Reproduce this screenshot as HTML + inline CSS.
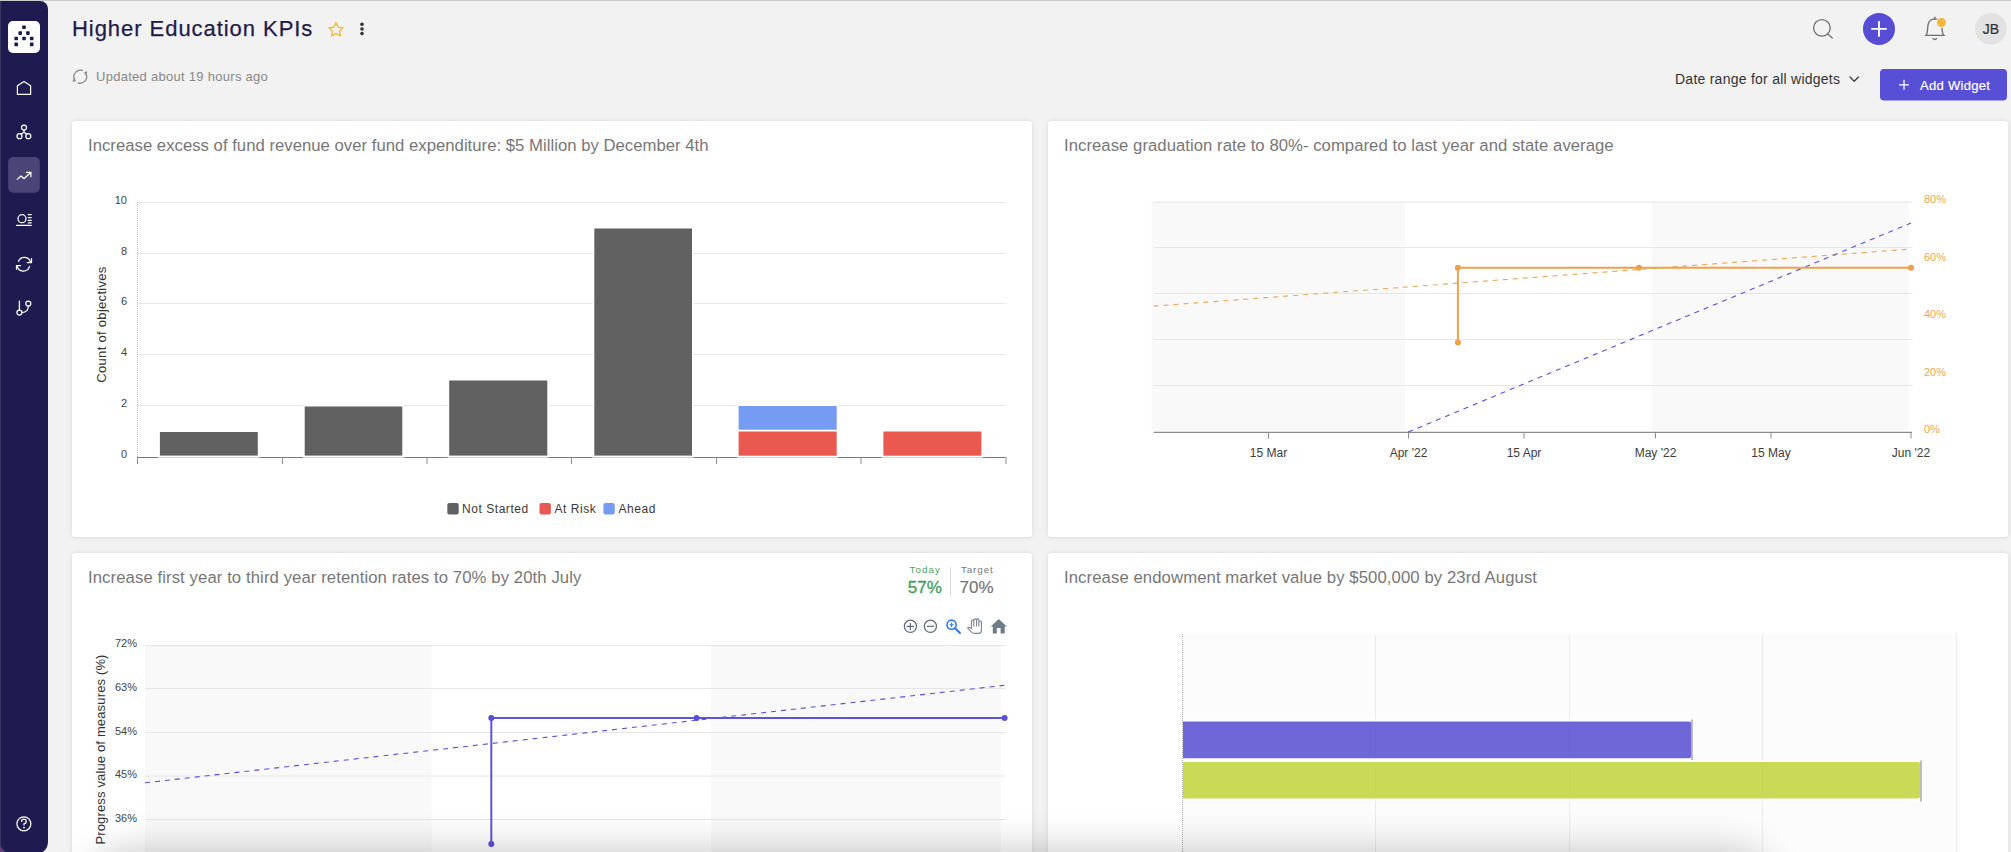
<!DOCTYPE html>
<html><head><meta charset="utf-8">
<style>
html,body{margin:0;padding:0;}
body{width:2011px;height:852px;overflow:hidden;background:#f2f2f2;position:relative;font-family:"Liberation Sans",sans-serif;}
.abs{position:absolute;}
#topline{left:0;top:0;width:2011px;height:1px;background:#c9c9c9;}
#side{left:0;top:1px;width:48px;height:853px;background:#1f1a4f;border-radius:0 8px 12px 12px;box-shadow:inset 1px 0 0 #3a3763;}
#purp{left:0;top:832px;width:20px;height:20px;background:radial-gradient(circle at 0 100%,#74407e 0,#5f3470 8px,#3a2a5e 14px,rgba(58,42,94,0) 20px);}
.card{position:absolute;background:#fff;border-radius:3px;box-shadow:0 0 5px rgba(0,0,0,0.11);}
.ctitle{position:absolute;font-size:16.7px;letter-spacing:0.06px;color:#777;white-space:nowrap;line-height:16px;}
svg{position:absolute;left:0;top:0;overflow:visible;}
</style></head>
<body>
<div id="topline" class="abs"></div>
<div id="purp" class="abs"></div>
<div id="side" class="abs"></div>

<svg width="2011" height="852" viewBox="0 0 2011 852" style="position:absolute;left:0;top:0">
<!-- logo -->
<rect x="8" y="21" width="32" height="32" rx="5" fill="#fff"/>
<g fill="#1f1a4f">
<rect x="22.2" y="25.4" width="3.6" height="3.6" rx="0.8"/>
<rect x="18.4" y="31.3" width="3.6" height="3.6" rx="0.8"/>
<rect x="26.1" y="31.3" width="3.6" height="3.6" rx="0.8"/>
<rect x="14.4" y="36.7" width="3.6" height="3.6" rx="0.8"/>
<rect x="22.2" y="36.7" width="3.6" height="3.6" rx="0.8"/>
<rect x="29.9" y="36.7" width="3.6" height="3.6" rx="0.8"/>
<rect x="14.4" y="42.6" width="3.6" height="3.6" rx="0.8"/>
<rect x="29.9" y="42.6" width="3.6" height="3.6" rx="0.8"/>
</g>
<rect x="8.2" y="157" width="31.6" height="35.7" rx="5" fill="#4a4477"/>
<g fill="none" stroke="#fff" stroke-width="1.25" stroke-linecap="round" stroke-linejoin="round">
<path d="M17.4,94.3 V85.7 L24,81.5 L30.6,85.7 V94.3 Z"/>
<circle cx="24" cy="127.6" r="2.5"/><circle cx="19.5" cy="136.2" r="2.5"/><circle cx="28.3" cy="136.2" r="2.5"/>
<path d="M24,130.1 V132.3 L21,134.3 M24,132.3 L26.9,134.3"/>
<path d="M17.3,179.4 L21,176 L24,178.7 L30.9,172.3 M26.4,172.3 H30.9 V176.7"/>
<circle cx="22" cy="218.7" r="4"/>
<path d="M28.2,214.5 H31.2 M28.2,217.5 H31.2 M28.2,220.3 H31.2 M28.2,222.8 H31.2 M16.6,225.4 H31.2"/>
<path d="M18.5,261.3 A6.3,6.3 0 0 1 30.5,262.3 M31.5,258.5 V262.5 H27.3"/>
<path d="M29.5,266.4 A6.3,6.3 0 0 1 17.2,265.8 M16.5,269.2 V265.5 H20.6"/>
<path d="M19.4,301.1 V310"/><circle cx="19.4" cy="312.5" r="2.5"/><circle cx="28.3" cy="303.6" r="2.5"/>
<path d="M28.3,306.1 Q28.3,312.5 21.9,312.5"/>
<circle cx="23.9" cy="823.8" r="7"/>
<path d="M21.6,821.4 A2.3,2.3 0 1 1 24,823.7 V825"/>
</g>
<circle cx="24" cy="827.6" r="0.9" fill="#fff"/>

<!-- header icons -->
<path d="M336,22.6 L338.2,27.2 L343,27.8 L339.5,31.2 L340.4,35.9 L336,33.6 L331.6,35.9 L332.5,31.2 L329,27.8 L333.8,27.2 Z" fill="none" stroke="#f4b942" stroke-width="1.4" stroke-linejoin="round"/>
<circle cx="362" cy="24.3" r="1.8" fill="#333"/><circle cx="362" cy="29" r="1.8" fill="#333"/><circle cx="362" cy="33.6" r="1.8" fill="#333"/>
<g fill="none" stroke="#8a8a8a" stroke-width="1.3" stroke-linecap="round">
<path d="M82.5,70.4 A6.7,6.7 0 0 0 74.2,79"/>
<path d="M78.3,83 A6.7,6.7 0 0 0 86.4,74.5"/>
</g>
<path d="M72.3,81.7 L74.3,77.6 L76,81.2 Z M87.7,71.6 L85.6,75.6 L84,72.1 Z" fill="#8a8a8a"/>

<g fill="none" stroke="#727272" stroke-width="1.35" stroke-linecap="round">
<circle cx="1821.9" cy="27.9" r="8.3"/>
<path d="M1827.8,33.9 L1832.2,38"/>
</g>
<circle cx="1879" cy="28.9" r="16" fill="#574cd6"/>
<path d="M1871.2,28.9 H1886.8 M1879,21.1 V36.8" stroke="#fff" stroke-width="1.9"/>
<g fill="none" stroke="#727272" stroke-width="1.35" stroke-linecap="round" stroke-linejoin="round">
<path d="M1925.4,35.3 H1944.4 M1926.6,34.6 C1927.8,32 1927.4,28 1928,25 C1928.8,21 1931.5,19 1934.8,19 C1938,19 1940.8,21 1941.6,25 C1942.2,28 1941.8,32 1943.2,34.6"/>
<path d="M1934.8,17.2 V19" />
<path d="M1933,38.6 Q1934.8,40.4 1936.6,38.6"/>
</g>
<circle cx="1941.4" cy="22.5" r="5.5" fill="#f2f2f2"/>
<circle cx="1941.4" cy="22.5" r="4.5" fill="#f2b73e"/>
<circle cx="1990.9" cy="28.8" r="15.9" fill="#e2e2e2"/>
</svg>
<div class="abs" style="left:72px;top:15px;font-size:22px;letter-spacing:0.95px;color:#1e1b4b;-webkit-text-stroke:0.25px #1e1b4b;white-space:nowrap;line-height:28px;">Higher Education KPIs</div>
<div class="abs" style="left:96px;top:69px;font-size:13px;letter-spacing:0.28px;color:#888;white-space:nowrap;line-height:16px;">Updated about 19 hours ago</div>
<div class="abs" style="left:1975px;top:21px;width:32px;text-align:center;font-size:14px;color:#333;-webkit-text-stroke:0.2px #333;line-height:16px;">JB</div>
<div class="abs" style="left:1675px;top:71px;font-size:14px;letter-spacing:0.25px;color:#333;white-space:nowrap;line-height:16px;">Date range for all widgets</div>
<svg width="2011" height="852" viewBox="0 0 2011 852" style="position:absolute;left:0;top:0">
<path d="M1850,77 L1854.2,81.2 L1858.4,77" fill="none" stroke="#444" stroke-width="1.4" stroke-linecap="round" stroke-linejoin="round"/>
<rect x="1880" y="69" width="127" height="31.6" rx="4" fill="#574fd6"/>
<path d="M1899,84.8 H1909 M1904,79.8 V89.8" stroke="#fff" stroke-width="1.3"/>
</svg>
<div class="abs" style="left:1920px;top:78px;font-size:13px;letter-spacing:0.3px;color:#fff;-webkit-text-stroke:0.2px #fff;white-space:nowrap;line-height:16px;">Add Widget</div>

<!-- cards -->
<div class="card" style="left:72px;top:121px;width:960px;height:416px;"></div>
<div class="card" style="left:1048px;top:121px;width:960px;height:416px;"></div>
<div class="card" style="left:72px;top:553px;width:960px;height:320px;"></div>
<div class="card" style="left:1048px;top:553px;width:960px;height:320px;"></div>

<div class="ctitle" style="left:88px;top:138px;letter-spacing:0.023px;">Increase excess of fund revenue over fund expenditure: $5 Million by December 4th</div>
<div class="ctitle" style="left:1064px;top:138px;letter-spacing:0.046px;">Increase graduation rate to 80%- compared to last year and state average</div>
<div class="ctitle" style="left:88px;top:570px;letter-spacing:0.094px;">Increase first year to third year retention rates to 70% by 20th July</div>
<div class="ctitle" style="left:1064px;top:570px;letter-spacing:0.095px;">Increase endowment market value by $500,000 by 23rd August</div>


<svg width="2011" height="852" viewBox="0 0 2011 852" style="position:absolute;left:0;top:0">
<path d="M137,202.5 H1006" stroke="#e6e6e6" stroke-width="1"/><path d="M137,253.5 H1006" stroke="#e6e6e6" stroke-width="1"/><path d="M137,303.5 H1006" stroke="#e6e6e6" stroke-width="1"/><path d="M137,354.5 H1006" stroke="#e6e6e6" stroke-width="1"/><path d="M137,405.5 H1006" stroke="#e6e6e6" stroke-width="1"/>
<path d="M137.5,202 V457" stroke="#bbb" stroke-width="1" stroke-dasharray="1,1"/>
<g font-family="Liberation Sans" font-size="11" fill="#444"><text x="127" y="204" text-anchor="end">10</text><text x="127" y="254.5" text-anchor="end">8</text><text x="127" y="305" text-anchor="end">6</text><text x="127" y="356" text-anchor="end">4</text><text x="127" y="407" text-anchor="end">2</text><text x="127" y="458" text-anchor="end">0</text></g>
<text transform="translate(106,324.5) rotate(-90)" text-anchor="middle" font-size="13" letter-spacing="0.3" fill="#333" font-family="Liberation Sans">Count of objectives</text>
<path d="M137,457.5 H1006" stroke="#c8c8c8" stroke-width="1"/>
<g stroke="#fff" stroke-width="3" paint-order="stroke">
<rect x="159.9" y="432" width="97.9" height="23.6" fill="#616161"/>
<rect x="304.7" y="406.5" width="97.6" height="49.1" fill="#616161"/>
<rect x="449.2" y="380.5" width="98.1" height="75.1" fill="#616161"/>
<rect x="594.3" y="228.5" width="97.7" height="227.1" fill="#616161"/>
<rect x="738.6" y="406" width="98.1" height="23.7" fill="#759bf3"/>
<rect x="738.6" y="431.5" width="98.1" height="24.2" fill="#e95950"/>
<rect x="883.4" y="431.5" width="98.0" height="24.2" fill="#e95950"/>
</g>
<path d="M137,457.5 H158 M259.5,457.5 H303 M404.5,457.5 H447.5 M548.5,457.5 H592.5 M693.5,457.5 H737 M838,457.5 H881.5 M983,457.5 H1006" stroke="#7a7a7a" stroke-width="1"/>
<path d="M137.5,457 V464" stroke="#8c8c8c" stroke-width="1"/><path d="M282.5,457 V464" stroke="#8c8c8c" stroke-width="1"/><path d="M427,457 V464" stroke="#8c8c8c" stroke-width="1"/><path d="M571.5,457 V464" stroke="#8c8c8c" stroke-width="1"/><path d="M716.5,457 V464" stroke="#8c8c8c" stroke-width="1"/><path d="M861,457 V464" stroke="#8c8c8c" stroke-width="1"/><path d="M1006,457 V464" stroke="#8c8c8c" stroke-width="1"/>
<rect x="447.3" y="503" width="11.4" height="11.6" rx="2" fill="#616161"/>
<rect x="539.5" y="503" width="11.4" height="11.6" rx="2" fill="#e95950"/>
<rect x="603.4" y="503" width="11.4" height="11.6" rx="2" fill="#759bf3"/>
<g font-family="Liberation Sans" font-size="12" letter-spacing="0.55" fill="#3a3a3a">
<text x="462" y="512.8">Not Started</text>
<text x="554.5" y="512.8">At Risk</text>
<text x="618.5" y="512.8">Ahead</text>
</g>
</svg>

<svg width="2011" height="852" viewBox="0 0 2011 852" style="position:absolute;left:0;top:0">
<rect x="1151.5" y="202" width="253.5" height="229" fill="#f9f9f9"/>
<rect x="1652" y="202" width="256.5" height="229" fill="#f9f9f9"/>
<path d="M1153.5,202 H1912.5" stroke="#e6e6e6" stroke-width="1"/><path d="M1153.5,247.5 H1912.5" stroke="#e6e6e6" stroke-width="1"/><path d="M1153.5,293.5 H1912.5" stroke="#e6e6e6" stroke-width="1"/><path d="M1153.5,339.5 H1912.5" stroke="#e6e6e6" stroke-width="1"/><path d="M1153.5,385.5 H1912.5" stroke="#e6e6e6" stroke-width="1"/>
<path d="M1153.5,432.4 H1912" stroke="#8c8c8c" stroke-width="1.4"/>
<path d="M1268.5,432 V438.5" stroke="#8c8c8c" stroke-width="1"/><path d="M1408.5,432 V438.5" stroke="#8c8c8c" stroke-width="1"/><path d="M1524,432 V438.5" stroke="#8c8c8c" stroke-width="1"/><path d="M1655.5,432 V438.5" stroke="#8c8c8c" stroke-width="1"/><path d="M1771,432 V438.5" stroke="#8c8c8c" stroke-width="1"/><path d="M1911,432 V438.5" stroke="#8c8c8c" stroke-width="1"/>
<g font-family="Liberation Sans" font-size="12" fill="#3c3c3c" text-anchor="middle"><text x="1268.5" y="457">15 Mar</text><text x="1408.5" y="457">Apr '22</text><text x="1524" y="457">15 Apr</text><text x="1655.5" y="457">May '22</text><text x="1771" y="457">15 May</text><text x="1911" y="457">Jun '22</text></g>
<g font-family="Liberation Sans" font-size="11" fill="#f0a450"><text x="1924" y="203">80%</text><text x="1924" y="260.5">60%</text><text x="1924" y="318">40%</text><text x="1924" y="375.5">20%</text><text x="1924" y="433">0%</text></g>
<path d="M1153.6,306.1 L1911,249" stroke="#f0a450" stroke-width="1.1" stroke-dasharray="5,5" fill="none"/>
<path d="M1408.2,432 L1911,223" stroke="#5a4ee0" stroke-width="1.1" stroke-dasharray="5,5" fill="none"/>
<path d="M1457.9,342.6 V267.8 H1911" stroke="#efa04b" stroke-width="2" fill="none"/>
<g fill="#efa04b"><circle cx="1457.9" cy="342.6" r="3"/><circle cx="1457.9" cy="267.8" r="3"/><circle cx="1639" cy="267.8" r="3"/><circle cx="1911" cy="267.8" r="3"/></g>
</svg>

<svg width="2011" height="852" viewBox="0 0 2011 852" style="position:absolute;left:0;top:0">
<rect x="145" y="645" width="286.6" height="207" fill="#f9f9f9"/>
<rect x="711" y="645" width="290" height="207" fill="#f9f9f9"/>
<path d="M145,645.5 H1005.7" stroke="#e6e6e6" stroke-width="1"/><path d="M145,688.5 H1005.7" stroke="#e6e6e6" stroke-width="1"/><path d="M145,732.5 H1005.7" stroke="#e6e6e6" stroke-width="1"/><path d="M145,776 H1005.7" stroke="#e6e6e6" stroke-width="1"/><path d="M145,819.5 H1005.7" stroke="#e6e6e6" stroke-width="1"/>
<g font-family="Liberation Sans" font-size="11" fill="#444"><text x="137" y="647" text-anchor="end">72%</text><text x="137" y="690.5" text-anchor="end">63%</text><text x="137" y="734.5" text-anchor="end">54%</text><text x="137" y="778" text-anchor="end">45%</text><text x="137" y="821.5" text-anchor="end">36%</text></g>
<text transform="translate(105,749.5) rotate(-90)" text-anchor="middle" font-size="13" letter-spacing="0.15" fill="#333" font-family="Liberation Sans">Progress value of measures (%)</text>
<path d="M491.3,844 V718 H1004.6" stroke="#5d55d8" stroke-width="2" fill="none"/>
<g fill="#5a50d8"><circle cx="491.3" cy="844" r="3"/><circle cx="491.3" cy="718" r="3"/><circle cx="696.6" cy="718" r="3"/><circle cx="1004.6" cy="718" r="3"/></g>
<path d="M145,782.8 L1004.6,685.3" stroke="#5b50d8" stroke-width="1.1" stroke-dasharray="5,5" fill="none"/>
<path d="M950.5,567 V596.7" stroke="#dcdcdc" stroke-width="1"/>
<g font-family="Liberation Sans">
<text x="925.2" y="573" font-size="9.8" letter-spacing="1.05" fill="#4ca55e" text-anchor="middle">Today</text>
<text x="924.8" y="592.8" font-size="17" fill="#3da05a" stroke="#3da05a" stroke-width="0.3" text-anchor="middle">57%</text>
<text x="977.3" y="573" font-size="9.8" letter-spacing="0.9" fill="#777" text-anchor="middle">Target</text>
<text x="976.5" y="592.8" font-size="17" fill="#777" stroke="#777" stroke-width="0.2" text-anchor="middle">70%</text>
</g>
<g fill="none" stroke="#5f6b7a" stroke-width="1.2">
<circle cx="910.4" cy="626.3" r="6.1"/><path d="M906.8,626.3 H914 M910.4,622.7 V629.9"/>
<circle cx="930.4" cy="626.3" r="6.1"/><path d="M926.8,626.3 H934"/>
</g>
<g fill="none" stroke="#2a7be8" stroke-width="1.6" stroke-linecap="round">
<circle cx="951.6" cy="624.7" r="4.6"/><path d="M955,628.2 L960,633" stroke-width="2"/>
</g>
<path d="M949.4,624.7 H953.8 M951.6,622.5 V626.9" stroke="#2a7be8" stroke-width="1.1"/>
<path d="M971.5,628.5 V621.2 Q971.5,620 972.7,620 Q973.8,620 973.8,621.2 V626 V620 Q973.8,618.9 975.2,618.9 Q976.6,618.9 976.6,620 V626 V620 Q976.6,618.9 977.8,618.9 Q978.9,618.9 978.9,620.2 V626 V622 Q978.9,621 980.1,621 Q981.4,621 981.4,622 V630.5 Q981.4,633.4 978.5,633.4 H974 Q972,633.4 970.8,631.5 L967.8,628.2 Q967.5,627.3 968.5,627.3 Q969.8,627.5 971.5,628.5 Z" fill="none" stroke="#7a8592" stroke-width="1.1" stroke-linejoin="round"/>
<path d="M998.75,619.1 L1006.8,626.4 H1004.7 V633.4 H1000.6 V628.1 H996.8 V633.4 H992.8 V626.4 H990.7 Z" fill="#6e7b8b"/>
</svg>

<svg width="2011" height="852" viewBox="0 0 2011 852" style="position:absolute;left:0;top:0">
<rect x="1182" y="634" width="774" height="218" fill="#fcfcfc"/>
<path d="M1375.5,634 V852" stroke="#ebebeb" stroke-width="1"/><path d="M1569.5,634 V852" stroke="#ebebeb" stroke-width="1"/><path d="M1762.5,634 V852" stroke="#ebebeb" stroke-width="1"/><path d="M1956.5,634 V852" stroke="#ebebeb" stroke-width="1"/>
<path d="M1182.5,634 V852" stroke="#aaa" stroke-width="1" stroke-dasharray="1,1"/>
<rect x="1183" y="719.6" width="510.5" height="40.5" fill="#fff"/>
<rect x="1183" y="760.2" width="739.5" height="40.6" fill="#fff"/>
<path d="M1183,721.4 H1689 Q1691.2,721.4 1691.2,723.6 V756 Q1691.2,758.3 1689,758.3 H1183 Z" fill="#6f66d8"/>
<path d="M1183,762 H1918 Q1920,762 1920,764 V796.6 Q1920,798.6 1918,798.6 H1183 Z" fill="#c9da57"/>
<path d="M1375.5,721.4 V758.3 M1569.5,721.4 V758.3 M1375.5,762 V798.6 M1569.5,762 V798.6 M1762.5,762 V798.6" stroke="rgba(0,0,0,0.025)" stroke-width="1"/>
<path d="M1692,719.5 V760" stroke="#999" stroke-width="1.3"/>
<path d="M1921,760.5 V801.5" stroke="#999" stroke-width="1.3"/>
</svg>
<div class="abs" style="left:90px;top:852px;width:1680px;height:100px;border-radius:40px;box-shadow:0 0 40px rgba(0,0,0,0.24);"></div>

</body></html>
